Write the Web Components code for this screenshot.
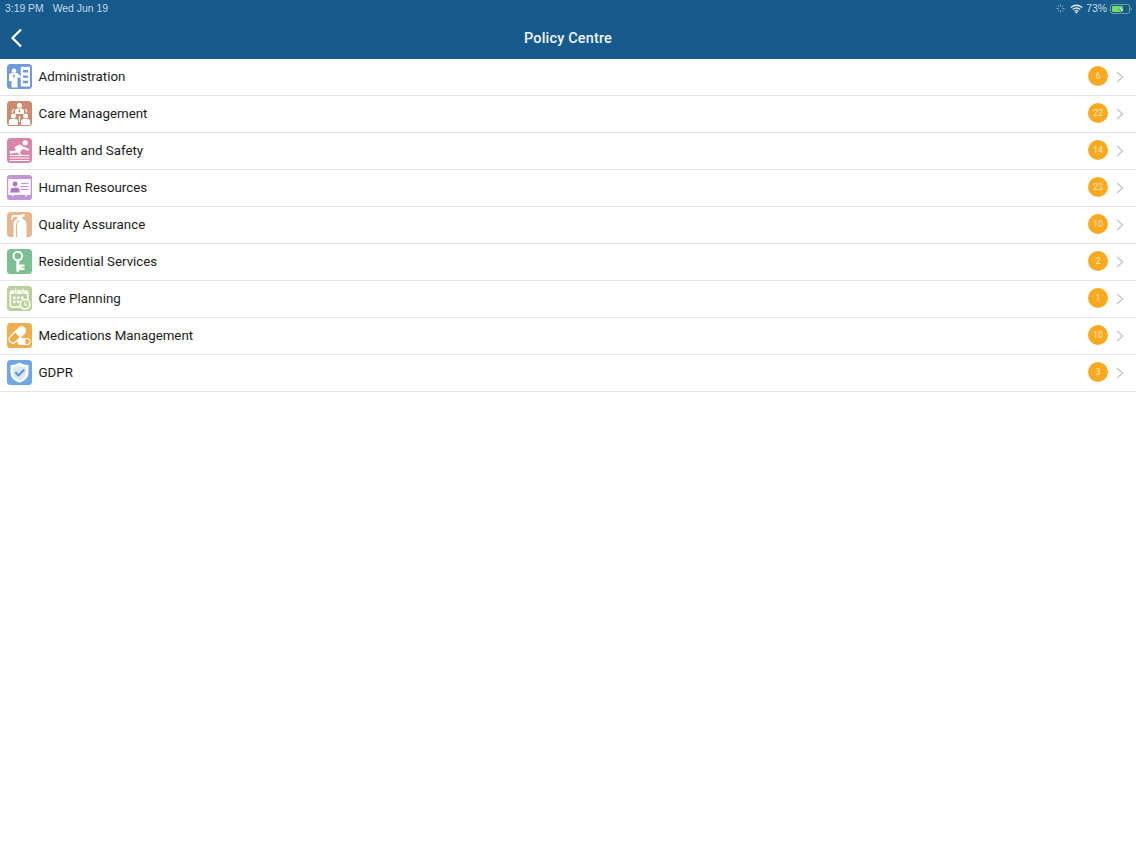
<!DOCTYPE html>
<html>
<head>
<meta charset="utf-8">
<title>Policy Centre</title>
<style>
  html, body { margin: 0; height: 100%; background: #fff; }
  body { font-family: Roboto, "Liberation Sans", sans-serif; }
</style>
</head>
<body>
<policy-app>
  <status-bar slot="top"></status-bar>
  <nav-bar slot="top" title-text="Policy Centre"></nav-bar>
  <policy-row icon="admin" count="6">Administration</policy-row>
  <policy-row icon="care" count="22">Care Management</policy-row>
  <policy-row icon="health" count="14">Health and Safety</policy-row>
  <policy-row icon="hr" count="23">Human Resources</policy-row>
  <policy-row icon="quality" count="10">Quality Assurance</policy-row>
  <policy-row icon="residential" count="2">Residential Services</policy-row>
  <policy-row icon="planning" count="1">Care Planning</policy-row>
  <policy-row icon="meds" count="10">Medications Management</policy-row>
  <policy-row icon="gdpr" count="3">GDPR</policy-row>
</policy-app>
<script>
const ICONS = {
  admin: `<rect width="25" height="25" rx="3.5" fill="#7099dc"/>
    <circle cx="7" cy="6.800" r="2.300" fill="#fff"/>
    <path d="M2 17v-5.500q0-2.500 2.500-2.500h5q1.500 0 3 2l1.500 2v1.500l-3.500-1.500v10.500H4.500V17z" fill="#fff"/>
    <path d="M7 9.400l-.9 2.800.9 1.800.9-1.800z" fill="#7099dc"/>
    <path d="M13.800 2.800H23v19.700h-9.200z" fill="#fff"/>
    <path d="M16 6h5v2.400h-5zM16 11.400h5v2.400h-5zM16 16.800h5v2.400h-5z" fill="#7099dc"/>`,
  care: `<rect width="25" height="25" rx="3.5" fill="#cd8a70"/>
    <g fill="#fff">
      <circle cx="12.500" cy="4.600" r="2.500"/>
      <path d="M8 13v-3q0-2.600 2.600-2.600h3.800Q17 7.400 17 10v3z"/>
      <circle cx="6.400" cy="15" r="2.500"/>
      <path d="M1.800 24v-3.400q0-2.600 2.600-2.600h4q2.600 0 2.600 2.600V24z"/>
      <circle cx="18.600" cy="15" r="2.500"/>
      <path d="M14 24v-3.400q0-2.600 2.600-2.600h4q2.600 0 2.600 2.600V24z"/>
    </g>
    <path d="M4.800 11.500l1.900-3.500M20.200 11.500l-1.900-3.500M12.500 15v6" stroke="#fff" stroke-width="1.200" fill="none"/>
    <path d="M12.500 8l-1 2.200 1 1.600 1-1.600z" fill="#cd8a70"/>`,
  health: `<rect width="25" height="25" rx="3.500" fill="#da85aa"/>
    <circle cx="18.200" cy="4.800" r="2.600" fill="#fff"/>
    <path d="M2.800 14.500l6.200-.8 3-3.800 5 .2 4.500 1.800" fill="none" stroke="#fff" stroke-width="2.400"/>
    <path d="M7.500 9l5-2.500 3.500 1.500-1 4-2.500 2.500 2.500 2h-3l-2.500-3z" fill="#fff"/>
    <path d="M2.800 17.500h19.400M2.800 20h19.400M2.800 22.500h19.400" stroke="#fff" stroke-width="1.200"/>`,
  hr: `<rect x=".6" y=".6" width="23.800" height="23.800" rx="3" fill="#fbf7fd" stroke="#c195d4" stroke-width="1.200"/>
    <path d="M0 3.500q0-3.500 3.500-3.500h18q3.500 0 3.500 3.500v.5H0zM0 20h25v1.500q0 3.500-3.500 3.500h-18Q0 25 0 21.500z" fill="#c195d4"/>
    <path d="M5 20h1.400v1.500H5zM18.500 20h1.400v1.500h-1.400z" fill="#fbf7fd"/>
    <circle cx="8" cy="9" r="2.400" fill="#ab78c4"/>
    <path d="M3.500 17.500v-2q0-2.800 2.800-2.800h3.400q2.800 0 2.800 2.800v2z" fill="#ab78c4"/>
    <path d="M14 8.500h7.500M14 11.500h7.500M14 14.500h7.500" stroke="#c195d4" stroke-width="1.100"/>`,
  quality: `<rect width="25" height="25" rx="3.500" fill="#e8b68e"/>
    <path d="M6.500 25V12q0-4 4-5.500h4q5 1.200 5 6.500v12z" fill="#fff"/>
    <path d="M9.500 25V13q0-3 2.500-4.500" stroke="#e8b68e" stroke-width="1.100" fill="none"/>
    <path d="M10.500 7V5H6.500L4.500 9l-.5-2.500L5.500 3h6.500L17.500 2v2.200L15 5v2z" fill="#fff"/>`,
  residential: `<rect width="25" height="25" rx="3.500" fill="#7cc092"/>
    <circle cx="10.800" cy="7" r="4.300" fill="none" stroke="#fff" stroke-width="2"/>
    <path d="M9.300 11h3v11l-1.500 1.600-1.500-1.600z" fill="#fff"/>
    <path d="M12 15.500h5.500v2.200h-2.300v1h2.300v2.300H12z" fill="#fff"/>`,
  planning: `<rect width="25" height="25" rx="3.500" fill="#bcd09a"/>
    <rect x="3.300" y="5" width="17.400" height="16" rx="1.500" fill="none" stroke="#fff" stroke-width="1.500"/>
    <path d="M3.300 5h17.400v3H3.300z" fill="#fff"/>
    <path d="M7.500 2.500h2v5h-2zM15 2.500h2v5h-2z" fill="#fff" stroke="#bcd09a" stroke-width=".6"/>
    <path d="M6 10.500h2.500V13H6zM10 10.500h2.500V13H10zM14 10.500h2.500V13H14zM6 14.500h2.500V17H6zM10 14.500h2.500V17H10z" fill="#fff"/>
    <circle cx="18" cy="18.300" r="4.800" fill="#bcd09a" stroke="#fff" stroke-width="1.500"/>
    <path d="M17.800 15.800v2.700l2.200 1" stroke="#fff" stroke-width="1.200" fill="none"/>`,
  meds: `<rect width="25" height="25" rx="3.500" fill="#efae4e"/>
    <path d="M3.300 13.500L12 5a3.700 3.700 0 0 1 5.300 5.300L8.500 19a3.700 3.700 0 0 1-5.200-5.500z" fill="none" stroke="#fff" stroke-width="1.300"/>
    <path d="M8 9.200L12 5a3.700 3.700 0 0 1 5.300 5.300l-4.100 4.200z" fill="#fff"/>
    <rect x="10.500" y="15" width="13" height="7" rx="3.500" fill="#fff"/>
    <path d="M18 15.600h2.300q2.800.2 2.800 2.900t-2.800 2.900H18z" fill="#efae4e" stroke="#fff" stroke-width=".8"/>`,
  gdpr: `<rect width="25" height="25" rx="3.500" fill="#6fa6e6"/>
    <path d="M12.500 2.800q4.500 2.400 9 2.500v7.500q0 6.500-9 10-9-3.500-9-10V5.300q4.500-.1 9-2.500z" fill="#fff"/>
    <path d="M12.500 5.200q3.500 1.800 6.800 2v5.600q0 5-6.800 7.800-6.800-2.800-6.800-7.800V7.200q3.300-.2 6.800-2z" fill="#dbe9fa"/>
    <path d="M8.300 12.300l3.200 3.200 5.600-5.800" stroke="#5b97de" stroke-width="2.200" fill="none"/>`
}

const appTemplate = document.createElement('template')
appTemplate.innerHTML = `
<style>
  :host { display: flex; flex-direction: column; width: 1136px; height: 852px; overflow: hidden; background: #fff; }
  header { display: flex; flex-direction: column; background: #175a8c; height: 59px; flex: none; }
  main { display: flex; flex-direction: column; }
</style>
<header><slot name="top"></slot></header>
<main><slot></slot></main>
`
customElements.define('policy-app',
  class extends HTMLElement {
    constructor() {
      super()
      this.attachShadow({ mode: 'open' })
        .appendChild(appTemplate.content.cloneNode(true))
    }
  }
)

const statusTemplate = document.createElement('template')
statusTemplate.innerHTML = `
<style>
  :host { display: flex; align-items: center; justify-content: space-between; height: 17px; padding: 0 4px 0 5px;
    font: 10.400px/16px "Liberation Sans", Arial, sans-serif; color: #c6d9e8; }
  .left, .right { display: flex; align-items: center; }
  .left { gap: 9px; }
  .right { gap: 3px; }
  svg { display: block; }
  .dim { margin-right: 2px; }
</style>
<div class="left"><span>3:19 PM</span><span>Wed Jun 19</span></div>
<div class="right">
  <svg class="dim" width="9" height="9" viewBox="0 0 9 9" stroke="#8fb3d0" stroke-width=".9" fill="none"><path d="M4.500 .5v2M4.500 6.500v2M.5 4.500h2M6.500 4.500h2M1.700 1.700l1.400 1.400M5.900 5.900l1.400 1.400M7.300 1.700L5.900 3.100M3.100 5.900L1.700 7.300"/></svg>
  <svg width="13" height="10" viewBox="0 0 13 10" fill="none" stroke="#e4eef5" stroke-width="1.400"><path d="M.8 3.500q5.700-4.500 11.400 0M2.700 5.500q3.800-3 7.600 0M4.600 7.400q1.900-1.500 3.800 0"/><path d="M6.500 9.700L5.200 8.300q1.300-.9 2.600 0z" fill="#e4eef5" stroke="none"/></svg>
  <span>73%</span>
  <svg width="22" height="10" viewBox="0 0 22 10" fill="none">
    <rect x=".5" y=".5" width="19" height="9" rx="2" stroke="#6fa58c"/>
    <rect x="2" y="2" width="11" height="6" rx="1" fill="#6fdc6a"/>
    <path d="M20.500 3.300q1.300.4 1.300 1.700t-1.300 1.700z" fill="#6fa58c"/>
    <path d="M12.500 .8L8.500 5.500h2.600L10 9.200l4-4.700h-2.600z" fill="#fff" stroke="#175a8c" stroke-width=".5"/>
  </svg>
</div>
`
customElements.define('status-bar',
  class extends HTMLElement {
    constructor() {
      super()
      this.attachShadow({ mode: 'open' })
        .appendChild(statusTemplate.content.cloneNode(true))
    }
  }
)

const navTemplate = document.createElement('template')
navTemplate.innerHTML = `
<style>
  :host { display: grid; grid-template-columns: 60px 1fr 60px; align-items: center; height: 42px; color: #eef4f9; }
  button { all: unset; display: flex; padding: 0 0 1px 10px; }
  h1 { margin: 1px 0 0; text-align: center; font: 500 14.500px/20px Roboto, "Liberation Sans", sans-serif; letter-spacing: .15px; }
</style>
<button aria-label="Back">
  <svg width="13" height="20" viewBox="0 0 13 20" fill="none" stroke="#fff" stroke-width="2.200"><path d="M11 1.500L2.500 10l8.500 8.500"/></svg>
</button>
<h1></h1>
<span></span>
`
customElements.define('nav-bar',
  class extends HTMLElement {
    constructor() {
      super()
      this.attachShadow({ mode: 'open' })
        .appendChild(navTemplate.content.cloneNode(true))
      this.shadowRoot.querySelector('h1').textContent = this.getAttribute('title-text')
    }
  }
)

const rowTemplate = document.createElement('template')
rowTemplate.innerHTML = `
<style>
  :host { display: flex; align-items: center; box-sizing: border-box; height: 37px; padding: 0 12px 0 7px;
    border-bottom: 1px solid #e4e4e4; color: #1c1c1c; font: 13.300px/20px Roboto, "Liberation Sans", sans-serif; }
  .icon { width: 25px; height: 25px; flex: none; margin: 0 6.500px 1px 0; }
  .icon svg { display: block; }
  .label { flex: 1; }
  .count { width: 20px; height: 20px; border-radius: 50%; background: #f8a91f; color: #fde6b8;
    font-size: 9px; line-height: 20px; text-align: center; margin: -2px 8px 0 0; }
  .chevron { display: block; }
</style>
<span class="icon"></span>
<span class="label"><slot></slot></span>
<span class="count"></span>
<svg class="chevron" width="8" height="12" viewBox="0 0 8 12" fill="none" stroke="#c4c4c4" stroke-width="1.300"><path d="M1 1l5.500 5L1 11"/></svg>
`
customElements.define('policy-row',
  class extends HTMLElement {
    constructor() {
      super()
      this.attachShadow({ mode: 'open' })
        .appendChild(rowTemplate.content.cloneNode(true))
      this.shadowRoot.querySelector('.icon').innerHTML =
        `<svg width="25" height="25" viewBox="0 0 25 25">${ICONS[this.getAttribute('icon')]}</svg>`
      this.shadowRoot.querySelector('.count').textContent = this.getAttribute('count')
    }
  }
)
</script>
</body>
</html>
